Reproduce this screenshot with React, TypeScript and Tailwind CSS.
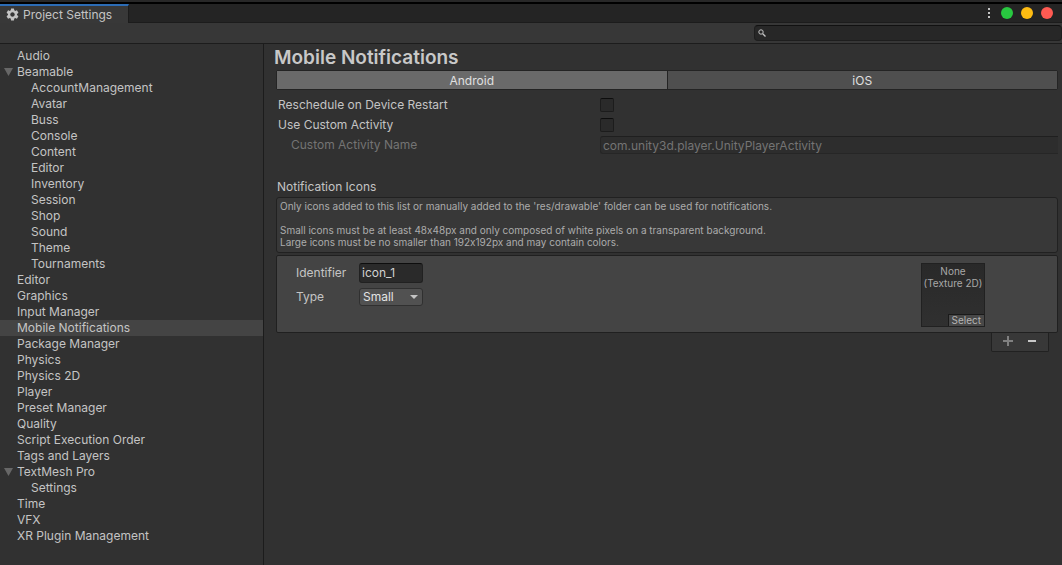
import { useState } from "react"
import { clsx } from "clsx"
import { MdSettings } from "react-icons/md"

type Item = { name: string; children?: string[] }

const items: Item[] = [
  { name: "Audio" },
  {
    name: "Beamable",
    children: [
      "AccountManagement",
      "Avatar",
      "Buss",
      "Console",
      "Content",
      "Editor",
      "Inventory",
      "Session",
      "Shop",
      "Sound",
      "Theme",
      "Tournaments",
    ],
  },
  { name: "Editor" },
  { name: "Graphics" },
  { name: "Input Manager" },
  { name: "Mobile Notifications" },
  { name: "Package Manager" },
  { name: "Physics" },
  { name: "Physics 2D" },
  { name: "Player" },
  { name: "Preset Manager" },
  { name: "Quality" },
  { name: "Script Execution Order" },
  { name: "Tags and Layers" },
  { name: "TextMesh Pro", children: ["Settings"] },
  { name: "Time" },
  { name: "VFX" },
  { name: "XR Plugin Management" },
]

function SearchIcon() {
  return (
    <svg viewBox="0 0 8 8" className="size-2 shrink-0" fill="none" stroke="#c4c4c4" aria-hidden>
      <circle cx="3" cy="3" r="2.2" strokeWidth="1" />
      <path d="M4.7 4.7 7.5 7.5" strokeWidth="1.3" />
    </svg>
  )
}

function Sidebar() {
  return (
    <nav className="w-[264px] shrink-0 border-r border-[#1c1c1c] pt-1">
      <ul>
        {items.map((item) => (
          <li key={item.name}>
            <a
              href="#"
              className={clsx(
                "flex h-4 items-center",
                item.name === "Mobile Notifications" && "bg-[#444444]",
              )}
            >
              <span className="flex w-[17px] shrink-0 justify-center">
                {item.children && (
                  <svg viewBox="0 0 9 8" className="h-2 w-[9px]" fill="#676767" aria-hidden>
                    <path d="M0 0h9L4.5 8z" />
                  </svg>
                )}
              </span>
              {item.name}
            </a>
            {item.children && (
              <ul>
                {item.children.map((child) => (
                  <li key={child}>
                    <a href="#" className="flex h-4 items-center pl-[31px]">
                      {child}
                    </a>
                  </li>
                ))}
              </ul>
            )}
          </li>
        ))}
      </ul>
    </nav>
  )
}

function CheckRow({ id, label }: { id: string; label: string }) {
  return (
    <div className="flex h-5 items-center">
      <label htmlFor={id} className="w-[322px] shrink-0">
        {label}
      </label>
      <input
        id={id}
        type="checkbox"
        className="size-3.5 appearance-none rounded-xs border border-[#1c1c1c] border-t-[#0d0d0d] bg-[#2a2a2a] checked:bg-[#c4c4c4]"
      />
    </div>
  )
}

function IconEntry() {
  return (
    <div className="flex justify-between rounded-xs border border-[#202020] bg-[#444444] pt-[7px] pr-[72px] pb-[5px] pl-[19px]">
      <div className="flex flex-col gap-[5px]">
        <div className="flex h-5 items-center">
          <label htmlFor="identifier" className="w-[63px]">
            Identifier
          </label>
          <input
            id="identifier"
            defaultValue="icon_1"
            className="h-5 w-16 rounded-[3px] border border-[#212121] border-t-[#0d0d0d] bg-[#2a2a2a] px-0.5 pb-0.5 text-[#d2d2d2] outline-none"
          />
        </div>
        <div className="flex h-[18px] items-center">
          <label htmlFor="type" className="w-[63px]">
            Type
          </label>
          <div className="relative">
            <select
              id="type"
              className="block h-[18px] w-16 appearance-none rounded-[3px] border border-[#303030] bg-[#515151] pl-[3px] text-[#e4e4e4] outline-none"
            >
              <option>Small</option>
              <option>Large</option>
            </select>
            <svg
              viewBox="0 0 8 4"
              className="pointer-events-none absolute top-[7px] right-[5px] h-1 w-2"
              fill="#c4c4c4"
              aria-hidden
            >
              <path d="M0 0h8L4 4z" />
            </svg>
          </div>
        </div>
      </div>
      <div className="flex size-16 flex-col justify-between border border-[#212121] bg-linear-to-b from-[#292929] to-[#303030] text-[10px] leading-3 text-[#a8a8a8]">
        <p className="pt-px text-center whitespace-nowrap">
          None
          <br />
          (Texture 2D)
        </p>
        <button className="self-end border-t border-l border-[#1a1a1a] bg-[#484848] px-[3px] leading-[11px] text-[#b4b4b4]">
          Select
        </button>
      </div>
    </div>
  )
}

function MobileNotifications() {
  const [platform, setPlatform] = useState("Android")

  return (
    <main className="min-w-0 flex-1 pt-0.5">
      <h1 className="pl-2.5 text-[19px] leading-6 font-semibold text-[#c8c8c8]">
        Mobile Notifications
      </h1>
      <div className="pr-1 pl-3">
        <div className="flex h-5 rounded-xs border border-[#242424]">
          {["Android", "iOS"].map((name) => (
            <button
              key={name}
              onClick={() => setPlatform(name)}
              className={clsx(
                "flex-1 pt-0.5 text-[#e0e0e0] first:border-r first:border-[#242424]",
                platform === name ? "bg-[#6a6a6a]" : "bg-[#4f4f4f]",
              )}
            >
              {name}
            </button>
          ))}
        </div>

        <div className="mt-[5px] pl-0.5">
          <CheckRow id="reschedule" label="Reschedule on Device Restart" />
          <CheckRow id="custom" label="Use Custom Activity" />
          <div className="flex h-5 items-center text-[#747474]">
            <label htmlFor="activity" className="w-[322px] shrink-0 pl-[13px]">
              Custom Activity Name
            </label>
            <input
              id="activity"
              disabled
              defaultValue="com.unity3d.player.UnityPlayerActivity"
              className="h-[18px] min-w-0 flex-1 rounded-l-[3px] border border-r-0 border-[#262626] border-t-[#1f1f1f] bg-[#2d2d2d] px-0.5"
            />
          </div>
        </div>

        <h2 className="mt-6 pl-px leading-4">Notification Icons</h2>
        <div className="mt-0.5 rounded-[3px] border border-[#212121] bg-[#383838] px-[3px] pt-0.5 pb-1 text-[10px] leading-3 text-[#acacac]">
          <p>
            Only icons added to this list or manually added to the 'res/drawable' folder can be
            used for notifications.
          </p>
          <p className="mt-3">
            Small icons must be at least 48x48px and only composed of white pixels on a
            transparent background.
          </p>
          <p>Large icons must be no smaller than 192x192px and may contain colors.</p>
        </div>

        <section className="mt-0.5">
          <IconEntry />
          <div className="mr-[9px] flex justify-end">
            <div className="flex h-[19px] w-[58px] items-center justify-around rounded-b-xs border border-t-0 border-[#212121] bg-[#383838] px-1 pb-0.5">
              <button aria-label="Add icon" className="flex size-4 items-center justify-center">
                <svg viewBox="0 0 10 10" className="size-2.5" fill="#808080" aria-hidden>
                  <path d="M4 0h2v4h4v2H6v4H4V6H0V4h4z" />
                </svg>
              </button>
              <button aria-label="Remove icon" className="flex size-4 items-center justify-center">
                <svg viewBox="0 0 8 2" className="h-0.5 w-2" fill="#c8c8c8" aria-hidden>
                  <path d="M0 0h8v2H0z" />
                </svg>
              </button>
            </div>
          </div>
        </section>
      </div>
    </main>
  )
}

export default function App() {
  return (
    <div className="flex min-h-screen flex-col bg-[#313131] font-['Inter',sans-serif] text-[12px] leading-4 text-[#c4c4c4] [font-feature-settings:'calt'_0]">
      <header>
        <div className="h-1 border-b-2 border-black bg-[#282828]" />
        <div className="flex h-[19px] bg-[#242424]">
          <div className="flex w-[129px] items-center gap-[3px] border-t-2 border-r border-t-[#2c6cb5] border-r-[#1c1c1c] bg-[#383838] pl-[5px]">
            <MdSettings className="size-[15px] shrink-0" aria-hidden />
            <h2 className="whitespace-nowrap">Project Settings</h2>
          </div>
          <div className="flex flex-1 items-center justify-end gap-2 border-b border-[#1c1c1c] pr-[9px]">
            <button aria-label="Menu" className="px-[3px]">
              <svg viewBox="0 0 2 10" className="h-2.5 w-0.5" fill="#c4c4c4" aria-hidden>
                <path d="M0 0h2v2H0zM0 4h2v2H0zM0 8h2v2H0z" />
              </svg>
            </button>
            <button aria-label="Maximize" className="size-3 rounded-full bg-[#28c840]" />
            <button aria-label="Minimize" className="size-3 rounded-full bg-[#febc12]" />
            <button aria-label="Close" className="size-3 rounded-full bg-[#ff5a52]" />
          </div>
        </div>
        <div className="flex h-[21px] items-center justify-end border-b border-[#1c1c1c] bg-[#373737]">
          <label className="flex h-4 w-[308px] items-center gap-1 rounded-[4px] border border-[#1e1e1e] border-t-[#111111] bg-[#272727] pl-[3px]">
            <SearchIcon />
            <input aria-label="Search settings" className="min-w-0 flex-1 outline-none" />
          </label>
        </div>
      </header>
      <div className="flex flex-1">
        <Sidebar />
        <MobileNotifications />
      </div>
    </div>
  )
}
